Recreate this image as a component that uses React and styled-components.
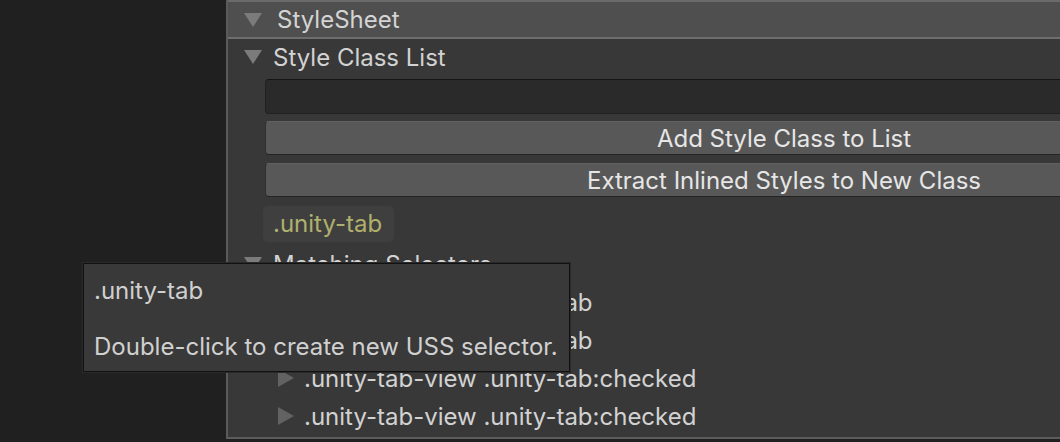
import React from 'react';
import styled, { createGlobalStyle } from 'styled-components';

const GlobalStyle = createGlobalStyle`
  html, body {
    margin: 0;
    padding: 0;
    background: #202020;
    overflow: hidden;
  }
  body {
    font-family: Inter, "Noto Sans", "Liberation Sans", sans-serif;
    color: #d2d2d2;
  }
`;

const Screen = styled.div`
  position: relative;
  display: flex;
  width: 1060px;
  height: 442px;
  overflow: hidden;
  background: #202020;
`;

const Gutter = styled.div`
  width: 226px;
  flex-shrink: 0;
  background: #202020;
`;

const Inspector = styled.div`
  flex: 1;
  display: flex;
  flex-direction: column;
  min-width: 0;
  height: 437px;
  background: #383838;
  border-left: 2px solid #5a5a5a;
  border-bottom: 2px solid #5c5c5c;
`;

const SectionHeader = styled.div`
  display: flex;
  align-items: center;
  height: 35px;
  padding-left: 16px;
  gap: 15px;
  background: #4f4f4f;
  border-top: 2px solid #6a6a6a;
  border-bottom: 2px solid #6e6e6e;
  font-size: 24px;
  color: #d4d4d4;
`;

const Foldout = styled.div`
  display: flex;
  align-items: center;
  height: ${({ $h }) => $h || 36}px;
  margin-top: ${({ $mt }) => $mt || 0}px;
  padding-left: ${({ $indent }) => $indent || 16}px;
  gap: ${({ $gap }) => $gap || 11}px;
  font-size: 24px;
  color: #d2d2d2;
  white-space: nowrap;
`;

// foldout triangles, pointing down when open and right when closed
const Arrow = ({ dir = 'down', color = '#7b7b7b', w = 18, h = 14 }) => (
  <svg width={w} height={h} viewBox={`0 0 ${w} ${h}`} style={{ flexShrink: 0 }}>
    {dir === 'down' ? (
      <polygon points={`0,0 ${w},0 ${w / 2},${h}`} fill={color} />
    ) : (
      <polygon points={`0,0 ${w},${h / 2} 0,${h}`} fill={color} />
    )}
  </svg>
);

const Body = styled.div`
  display: flex;
  flex-direction: column;
  padding-left: 37px;
`;

const TextField = styled.div`
  height: 33px;
  width: 1040px;
  margin-top: 4px;
  background: #2a2a2a;
  border: 1px solid #212121;
  border-top-color: #141414;
  border-radius: 4px;
`;

const Button = styled.div`
  display: flex;
  align-items: center;
  justify-content: center;
  width: 1036px;
  height: 32px;
  margin-top: ${({ $mt }) => $mt}px;
  background: #585858;
  border: 1px solid #303030;
  border-top-color: #616161;
  border-bottom-color: #242424;
  border-radius: 4px;
  font-size: 24px;
  color: #e6e6e6;
`;

const ClassTag = styled.div`
  align-self: flex-start;
  margin-top: 9px;
  margin-left: -2px;
  padding: 0 12px 0 10px;
  height: 36px;
  line-height: 36px;
  background: #3f3f3f;
  border-radius: 5px;
  font-size: 24px;
  color: #afb06c;
`;

const SelectorList = styled.div`
  display: flex;
  flex-direction: column;
`;

const Tooltip = styled.div`
  position: absolute;
  left: 83px;
  top: 263px;
  width: 487px;
  height: 109px;
  box-sizing: border-box;
  padding: 12px 10px 0 10px;
  background: #393939;
  border: 1px solid #111111;
  box-shadow: 0 0 0 1px #2a2a2a;
  font-size: 24px;
  color: #d0d0d0;
  display: flex;
  flex-direction: column;
  gap: 27px;
  white-space: nowrap;
`;

const selectors = [
  '.unity-tab-view .unity-tab',
  '.unity-tab-view .unity-tab',
  '.unity-tab-view .unity-tab:checked',
  '.unity-tab-view .unity-tab:checked',
];

export default function App() {
  return (
    <>
      <GlobalStyle />
      <Screen>
        <Gutter />
        <Inspector>
          <SectionHeader>
            <Arrow />
            StyleSheet
          </SectionHeader>
          <Foldout $h={36}>
            <Arrow />
            Style Class List
          </Foldout>
          <Body>
            <TextField />
            <Button $mt={7}>Add Style Class to List</Button>
            <Button $mt={8}>Extract Inlined Styles to New Class</Button>
            <ClassTag>.unity-tab</ClassTag>
          </Body>
          <Foldout $h={38} $mt={3}>
            <Arrow />
            Matching Selectors
          </Foldout>
          <SelectorList>
            {selectors.map((s, i) => (
              <Foldout key={i} $indent={50} $gap={10} $h={38}>
                <Arrow dir="right" color="#626262" w={16} h={18} />
                {s}
              </Foldout>
            ))}
          </SelectorList>
        </Inspector>
        <Tooltip>
          <span>.unity-tab</span>
          <span>Double-click to create new USS selector.</span>
        </Tooltip>
      </Screen>
    </>
  );
}
